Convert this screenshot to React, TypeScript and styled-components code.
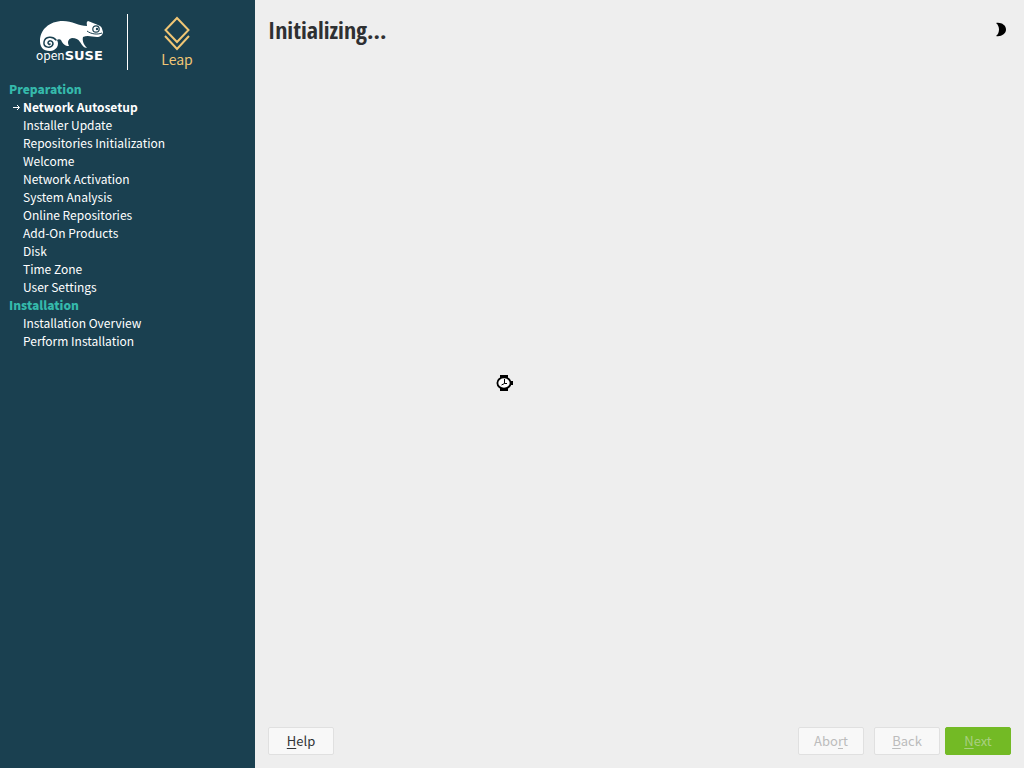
import React from "react";
import styled, { createGlobalStyle } from "styled-components";

const GlobalStyle = createGlobalStyle`
  * { box-sizing: border-box; }
  body {
    margin: 0;
    background: #eeeeee;
    font-family: "Noto Sans CJK SC", "Noto Sans", sans-serif;
    font-size: 13px;
    line-height: 18px;
  }
`;

const Page = styled.div`
  display: flex;
  min-height: 100vh;
`;

const Sidebar = styled.aside`
  flex: 0 0 255px;
  background: #1a4050;
  color: #ffffff;
  font-size: 12px;
`;

const Brand = styled.header`
  display: flex;
  align-items: flex-start;
  height: 80px;
  padding: 14px 0 0 36px;
`;

const SuseLogo = styled.div`
  width: 92px;
  height: 56px;
  padding-top: 4px;
  border-right: 1px solid #ffffff;
`;

const Wordmark = styled.div`
  margin-top: -4px;
  font-size: 12px;
  line-height: 14px;
  strong {
    font-family: "DejaVu Sans", sans-serif;
    font-size: 13px;
  }
`;

const LeapLogo = styled.div`
  display: flex;
  flex-direction: column;
  align-items: center;
  width: 98px;
  padding-top: 2px;
  color: #f0c675;
  font-size: 14px;
  line-height: 16px;
`;

const SectionTitle = styled.h2`
  margin: 0;
  padding-left: 9px;
  color: #35b9ab;
  font-size: 12px;
  font-weight: 900;
  line-height: 18px;
`;

const StepList = styled.ol`
  margin: 0;
  padding: 0;
  list-style: none;
`;

const Step = styled.li<{ $current?: boolean }>`
  display: flex;
  align-items: center;
  padding-left: ${(p) => (p.$current ? "12px" : "23px")};
  font-weight: ${(p) => (p.$current ? 700 : 400)};
  svg { flex: 0 0 11px; }
`;

const Main = styled.main`
  display: flex;
  flex: 1;
  flex-direction: column;
  padding: 14px 13px 13px;
`;

const TitleBar = styled.header`
  display: flex;
  align-items: flex-start;
  justify-content: space-between;
`;

const Title = styled.h1`
  margin: 0;
  color: #2e3032;
  font-family: "Open Sans Condensed", "Noto Sans Condensed", "Liberation Sans Narrow", "Noto Sans CJK SC", sans-serif;
  font-size: 24px;
  font-weight: 700;
  line-height: 32px;
`;

const ThemeButton = styled.button`
  display: flex;
  padding: 8px 3px;
  border: 0;
  background: none;
`;

const Waiting = styled.div`
  display: flex;
  flex: 1;
  align-items: center;
  padding: 0 0 8px 228px;
`;

const Footer = styled.footer`
  display: flex;
`;

const ActionButton = styled.button<{ $primary?: boolean }>`
  width: 66px;
  height: 28px;
  padding: 0;
  border: 1px solid ${(p) => (p.$primary ? "#73ba25" : "#e0e0e0")};
  border-radius: 2px;
  background: ${(p) => (p.$primary ? "#73ba25" : "#f8f8f8")};
  color: #323436;
  font: inherit;
  u { text-underline-offset: 2px; }
  &:disabled { color: ${(p) => (p.$primary ? "#a9cf82" : "#bcbcbc")}; }
`;

const Navigation = styled.div`
  display: flex;
  gap: 5px;
  margin-left: auto;
`;

const AbortSlot = styled.div`
  margin-right: 5px;
`;

const preparation = [
  "Network Autosetup",
  "Installer Update",
  "Repositories Initialization",
  "Welcome",
  "Network Activation",
  "System Analysis",
  "Online Repositories",
  "Add-On Products",
  "Disk",
  "Time Zone",
  "User Settings",
];
const installation = ["Installation Overview", "Perform Installation"];

const Chameleon = () => (
  <svg width="68" height="34" viewBox="0 0 68 34" aria-hidden="true" display="block">
    <path
      fill="#fff"
      d="M4 23C4 12 13 3 27 3C36 3 43 8 51 8C51 6 50 4 52 3C55 4 60 6 64 8C66 9 66 11 67 14C67 17 64 19 61 19C56 19 52 17 47 19C46 23 48 27 51 30C48 30 46 27 44 24C42 21 40 20 36 20C32 21 31 24 33 28C29 28 27 26 25 22C24 21 22 21 21 22C24 27 20 33 14 33C7 33 4 29 4 23Z"
    />
    <path
      fill="none"
      stroke="#1a4050"
      strokeWidth="1.500"
      strokeLinecap="round"
      d="M20 22C17 18 9 18 8 24C7 30 16 31 17 26C17 22 12 22 12 25C12 26 14 27 14 26"
    />
    <circle cx="60" cy="11" r="3.200" fill="#fff" stroke="#1a4050" strokeWidth="1.200" />
    <circle cx="61" cy="11" r="1.200" fill="#1a4050" />
    <path fill="none" stroke="#1a4050" strokeWidth="1" d="M51 13C55 16 61 17 66 15" />
  </svg>
);

const LeapMark = () => (
  <svg width="28" height="35" viewBox="0 0 28 35" aria-hidden="true" fill="none" stroke="#f0c675" strokeWidth="2">
    <path d="M14 2L25.500 14L14 26L2.500 14Z" />
    <path d="M2 20L14 33L26 20" />
  </svg>
);

const Arrow = () => (
  <svg width="11" height="9" viewBox="0 0 11 9" aria-hidden="true" fill="none" stroke="#fff">
    <path d="M1 4.500H7M5 2L7.500 4.500L5 7" />
  </svg>
);

const Moon = () => (
  <svg width="14" height="16" viewBox="0 0 14 16" aria-hidden="true">
    <path fill="#000" d="M2 1C7 0 12 3 12 7.500C12 12 7 15 2 14C6 11 6 4 2 1Z" />
  </svg>
);

const Watch = () => (
  <svg width="18" height="18" viewBox="0 0 18 18" role="img" aria-label="Please wait">
    <path d="M4 1H12V4H4ZM4 14H12V17H4ZM15 7H17V11H15Z" fill="#000" />
    <ellipse cx="8" cy="9" rx="6.600" ry="5.600" fill="#fff" stroke="#000" strokeWidth="1.800" />
    <path d="M8.500 5V9.500L5.500 11M8.500 9.500H11" fill="none" stroke="#000" />
  </svg>
);

export default function App() {
  return (
    <Page>
      <GlobalStyle />
      <Sidebar>
        <Brand>
          <SuseLogo>
            <Chameleon />
            <Wordmark>open<strong>SUSE</strong></Wordmark>
          </SuseLogo>
          <LeapLogo>
            <LeapMark />
            Leap
          </LeapLogo>
        </Brand>
        <SectionTitle>Preparation</SectionTitle>
        <StepList>
          {preparation.map((name, i) => (
            <Step key={name} $current={i === 0} aria-current={i === 0 ? "step" : undefined}>
              {i === 0 && <Arrow />}
              {name}
            </Step>
          ))}
        </StepList>
        <SectionTitle>Installation</SectionTitle>
        <StepList>
          {installation.map((name) => (
            <Step key={name}>{name}</Step>
          ))}
        </StepList>
      </Sidebar>
      <Main>
        <TitleBar>
          <Title>Initializing...</Title>
          <ThemeButton type="button" aria-label="Change theme"><Moon /></ThemeButton>
        </TitleBar>
        <Waiting><Watch /></Waiting>
        <Footer>
          <ActionButton type="button"><u>H</u>elp</ActionButton>
          <Navigation>
            <AbortSlot>
              <ActionButton type="button" disabled>Abo<u>r</u>t</ActionButton>
            </AbortSlot>
            <ActionButton type="button" disabled><u>B</u>ack</ActionButton>
            <ActionButton type="button" $primary disabled><u>N</u>ext</ActionButton>
          </Navigation>
        </Footer>
      </Main>
    </Page>
  );
}
